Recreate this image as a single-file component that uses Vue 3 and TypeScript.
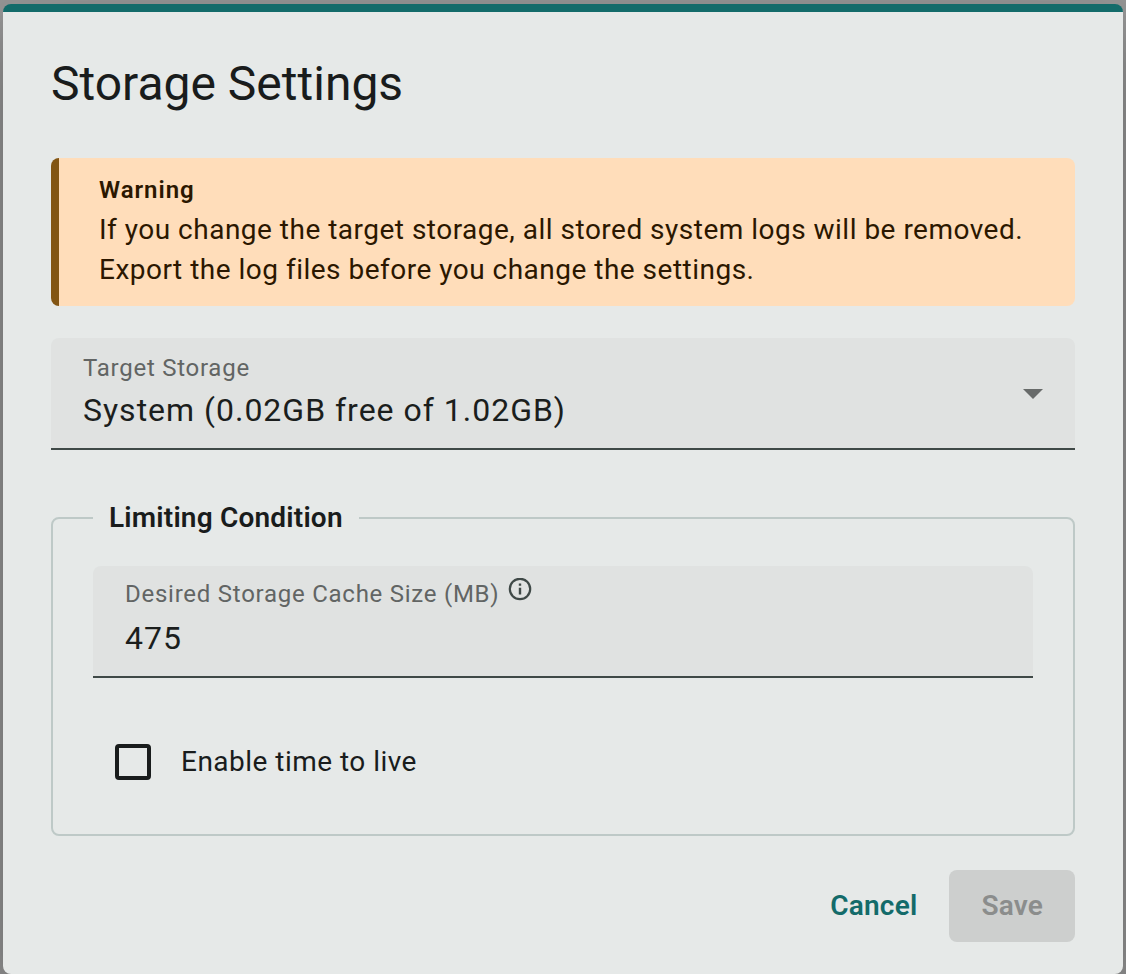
<script setup lang="ts">
import { ref } from 'vue'

const target = ref('system')
const cacheSize = ref('475')
const ttlEnabled = ref(false)
</script>

<template>
  <main class="backdrop">
    <section class="dialog" role="dialog" aria-labelledby="dialog-title">
      <h1 id="dialog-title" class="title">Storage Settings</h1>

      <div class="warning" role="alert">
        <strong class="warning-title">Warning</strong>
        <p class="warning-text">
          If you change the target storage, all stored system logs will be removed. Export the log
          files before you change the settings.
        </p>
      </div>

      <form @submit.prevent>
        <div class="field">
          <div class="label-row">
            <label class="field-label" for="target">Target Storage</label>
          </div>
          <select id="target" v-model="target" class="field-control">
            <option value="system">System (0.02GB free of 1.02GB)</option>
          </select>
          <svg class="arrow" viewBox="0 0 20 10" aria-hidden="true">
            <path d="M0 0H20L10 10Z" fill="currentColor" />
          </svg>
        </div>

        <fieldset class="group">
          <legend class="legend">Limiting Condition</legend>
          <div class="field with-info">
            <div class="label-row">
              <label class="field-label" for="cache">Desired Storage Cache Size (MB)</label>
              <svg class="info" viewBox="0 0 24 24" aria-hidden="true">
                <circle cx="12" cy="11" r="10.2" fill="none" stroke="currentColor" stroke-width="2.2" />
                <path d="M12 9.8V16.6M12 5.4V7.8" fill="none" stroke="currentColor" stroke-width="2.4" />
              </svg>
            </div>
            <input id="cache" v-model="cacheSize" class="field-control" type="text" inputmode="numeric" />
          </div>
          <div class="check-row">
            <input id="ttl" v-model="ttlEnabled" class="checkbox" type="checkbox" />
            <label for="ttl">Enable time to live</label>
          </div>
        </fieldset>

        <div class="actions">
          <button class="button cancel" type="button">Cancel</button>
          <button class="button save" type="submit" disabled>Save</button>
        </div>
      </form>
    </section>
  </main>
</template>

<style>
body {
  margin: 0;
  background: #999999;
}
</style>

<style scoped>
.backdrop {
  box-sizing: border-box;
  min-height: 100vh;
  padding: 4px 3px 0;
  overflow: hidden;
  background: #999999;
  color: #191c1c;
  font-family: Roboto, "Liberation Sans", sans-serif;
  font-size: 28px;
  line-height: 40px;
}
.dialog {
  padding: 40px 48px 32px;
  border-top: 8px solid #136b6a;
  border-radius: 8px;
  background: #e6e9e8;
  box-shadow:
    0 22px 30px -14px rgba(0, 0, 0, 0.2),
    0 48px 76px 6px rgba(0, 0, 0, 0.14),
    0 18px 92px 16px rgba(0, 0, 0, 0.12);
}
.title {
  margin: 0 0 42px;
  font-size: 48px;
  font-weight: 400;
  line-height: 64px;
}
.warning {
  margin-bottom: 32px;
  padding: 12px 40px 16px;
  border-left: 8px solid #825513;
  border-radius: 8px;
  background: #ffddba;
  color: #2b1700;
}
.warning-title {
  display: block;
  font-size: 24px;
  font-weight: 600;
  letter-spacing: 0.04em;
}
.warning-text {
  margin: 0;
  letter-spacing: 0.0175em;
}
.field {
  display: grid;
  grid-template-columns: minmax(0, 1fr);
  grid-template-rows: 32px 52px;
  padding: 14px 32px 12px;
  border-bottom: 2px solid #3f4947;
  border-radius: 8px 8px 0 0;
  background: #e0e2e1;
}
.with-info {
  grid-template-rows: 32px 56px;
  padding: 12px 32px 10px;
}
.label-row {
  display: flex;
  grid-area: 1 / 1;
  align-items: flex-start;
  gap: 9px;
}
.field-label {
  color: #626564;
  font-size: 24px;
  line-height: 32px;
  letter-spacing: 0.031em;
}
.field-control {
  grid-area: 2 / 1;
  width: 100%;
  margin: 0;
  padding: 0;
  border: 0;
  outline: 0;
  appearance: none;
  background: transparent;
  color: #1b1e1d;
  font: inherit;
  font-size: 32px;
  letter-spacing: 0.031em;
}
.arrow {
  grid-area: 1 / 1 / 3 / 2;
  place-self: center end;
  width: 20px;
  height: 10px;
  color: #686b6a;
  pointer-events: none;
}
.info {
  width: 24px;
  height: 24px;
  color: #3f4947;
}
.group {
  min-width: 0;
  margin: 48px 0 34px;
  padding: 28px 40px 52px;
  border: 2px solid #bec9c7;
  border-radius: 8px;
}
.legend {
  padding: 0 16px;
  font-weight: 600;
  letter-spacing: 0.007em;
}
.check-row {
  display: flex;
  align-items: center;
  gap: 30px;
  margin-top: 64px;
  padding-left: 22px;
  letter-spacing: 0.017em;
}
.checkbox {
  box-sizing: border-box;
  width: 36px;
  height: 36px;
  margin: 0;
  border: 4px solid #191c1c;
  border-radius: 4px;
  appearance: none;
}
.checkbox:checked {
  background: #136b6a;
}
.actions {
  display: flex;
  justify-content: flex-end;
}
.button {
  height: 72px;
  padding: 0 32px;
  border: 0;
  border-radius: 8px;
  background: transparent;
  font: inherit;
  font-weight: 600;
  letter-spacing: 0.007em;
}
.cancel {
  color: #136b6a;
}
.save {
  background: #cdcfce;
  color: #8b8d8c;
}
</style>
